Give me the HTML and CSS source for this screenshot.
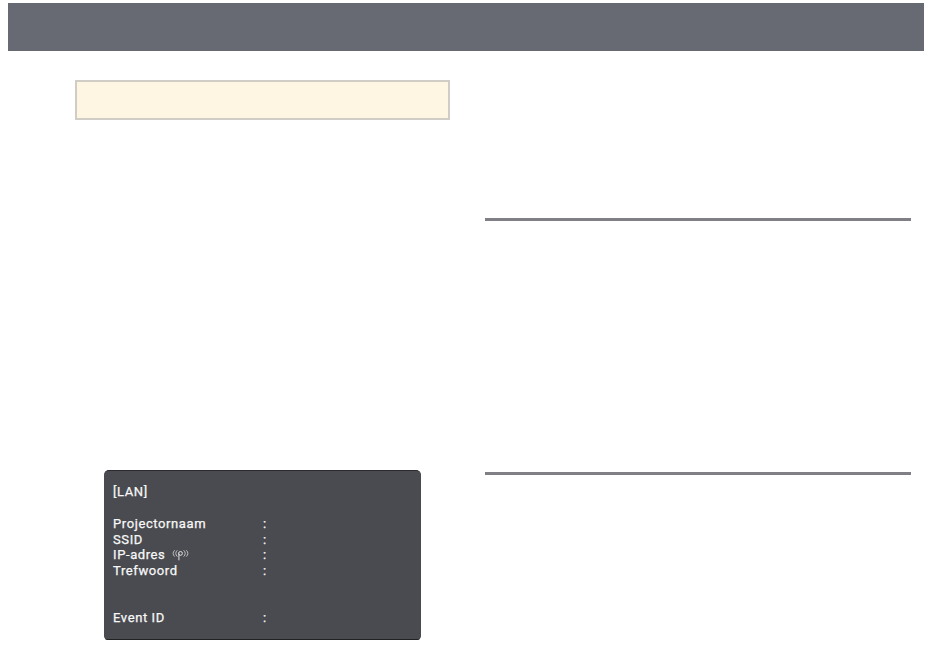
FILE: index.html
```html
<!DOCTYPE html>
<html lang="nl">
<head>
<meta charset="utf-8">
<title>LAN</title>
<link rel="stylesheet" href="styles.css">
</head>
<body>
<header class="top-bar"></header>
<main class="columns">
  <section class="col-left">
    <div class="note"></div>
    <div class="screen">
      <p class="screen-title">[LAN]</p>
      <dl class="info">
        <div class="row"><dt>Projectornaam</dt><dd>:</dd></div>
        <div class="row"><dt>SSID</dt><dd>:</dd></div>
        <div class="row"><dt>IP-adres<svg class="wifi" viewBox="0 0 18 11" width="19" height="12" aria-hidden="true"><path d="M3.500 1Q.5 4 3.500 7M6 1Q3 4 6 7M14.500 1Q17.500 4 14.500 7M12 1Q15 4 12 7" fill="none" stroke="#d4d4d6" stroke-width=".8"/><circle cx="9" cy="4" r="1.800" fill="none" stroke="#e8e8e9" stroke-width=".9"/><path d="M7.500 4v6.500" stroke="#e8e8e9" stroke-width=".9"/></svg></dt><dd>:</dd></div>
        <div class="row"><dt>Trefwoord</dt><dd>:</dd></div>
        <div class="row row-event"><dt>Event ID</dt><dd>:</dd></div>
      </dl>
    </div>
  </section>
  <section class="col-right">
    <hr class="rule rule-first">
    <hr class="rule rule-second">
  </section>
</main>
</body>
</html>
```
FILE: styles.css
```css
* { box-sizing: border-box; }
html, body { margin: 0; background: #fff; }
body { width: 950px; height: 659px; overflow: hidden; padding: 3px 26px 0 8px; font-family: Roboto, sans-serif; }
.top-bar { height: 48px; background: #686a73; }
.columns { display: grid; grid-template-columns: 375px 426px; column-gap: 35px; padding: 29px 0 0 67px; }
.note { height: 40px; background: #fef6e3; border: 2px solid #cfcdc6; }
.screen { margin: 350px 29px 0; height: 169px; background: #4a4b50; border-radius: 5px 5px 3px 3px; border-top: 1px solid #2b2b2e; box-shadow: 0 2px 0 -1px #222; color: #f8f8f8; padding: 13px 9px 0; font-size: 13px; font-weight: 400; letter-spacing: .6px; -webkit-text-stroke: .25px #f8f8f8; }
.screen-title { margin: 0 0 16px; line-height: 16px; }
.info { margin: 0; }
.row { display: grid; grid-template-columns: 150px auto; line-height: 15.700px; height: 15.700px; }
.row dt, .row dd { margin: 0; }
.row-event { margin-top: 31px; }
.wifi { vertical-align: -2px; margin-left: 6px; -webkit-text-stroke: 0; }
.rule { border: 0; margin: 0; height: 3px; background: #7f7f85; }
.rule-first { margin-top: 138px; }
.rule-second { margin-top: 251px; }
```
